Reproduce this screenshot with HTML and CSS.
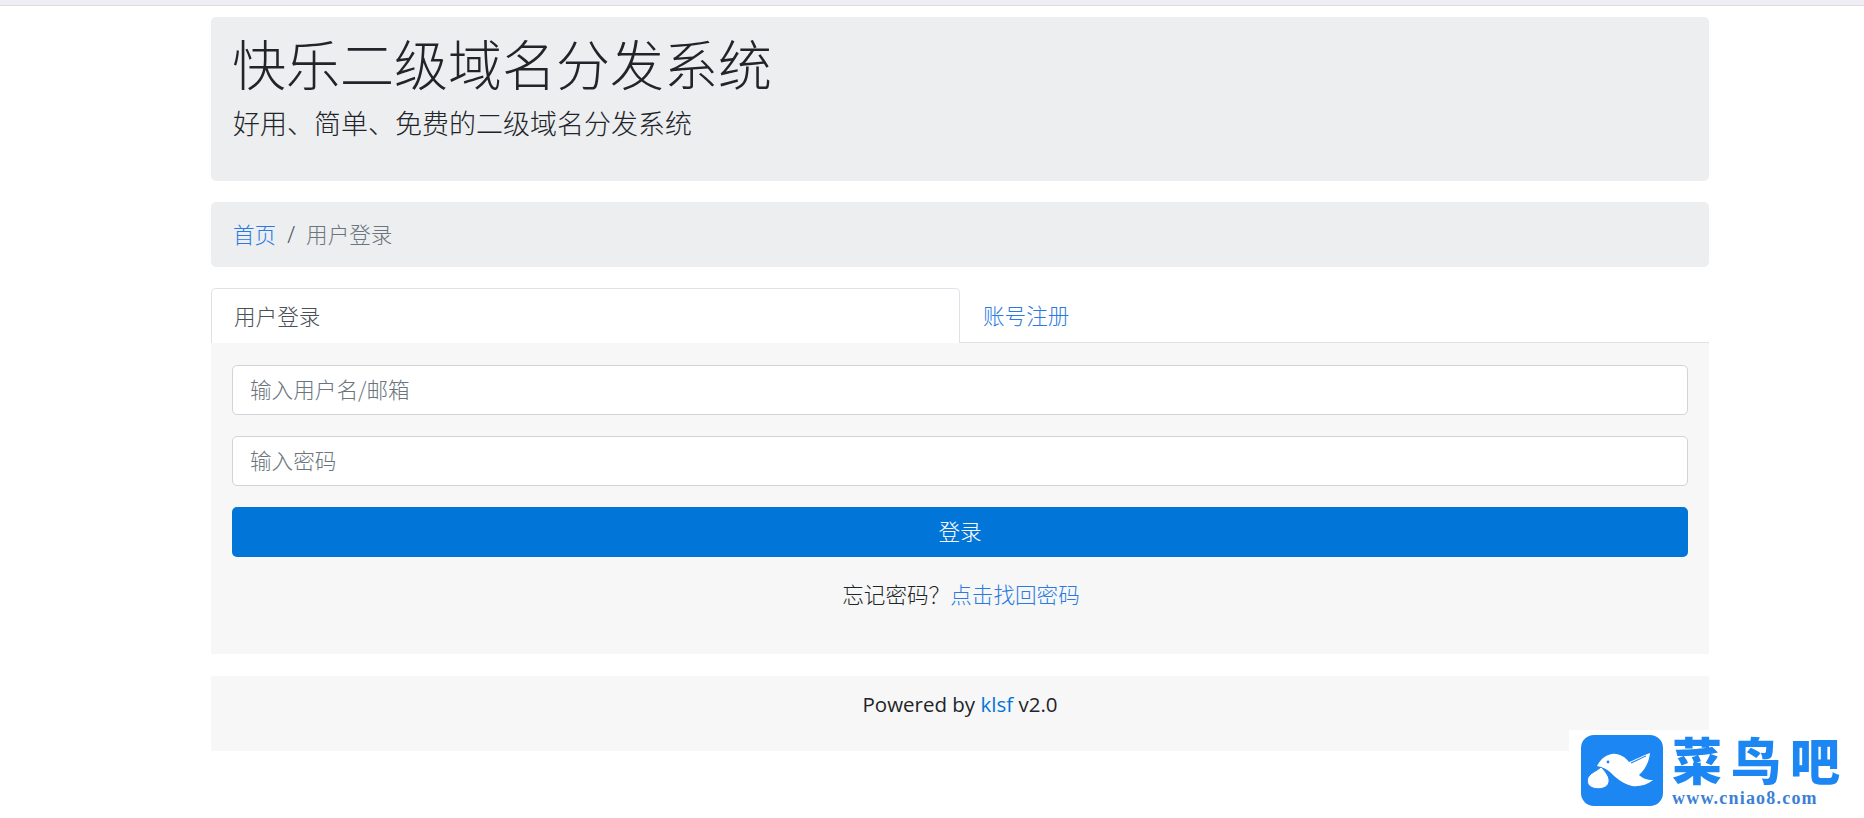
FILE: index.html
```html
<!DOCTYPE html>
<html lang="zh-CN">
<head>
<meta charset="utf-8">
<title>快乐二级域名分发系统</title>
<link rel="stylesheet" href="styles.css">
</head>
<body>
<div class="topbar"></div>
<main class="container">
  <header class="hero">
    <h1 class="hero-title">快乐二级域名分发系统</h1>
    <p class="hero-lead">好用、简单、免费的二级域名分发系统</p>
  </header>
  <nav class="crumbs">
    <a href="#" class="link">首页</a>
    <span class="crumb-sep">/</span>
    <span class="crumb-current">用户登录</span>
  </nav>
  <div class="tabs">
    <a href="#" class="tab tab-active">用户登录</a>
    <a href="#" class="tab link">账号注册</a>
  </div>
  <form class="panel">
    <input class="field" type="text" placeholder="输入用户名/邮箱">
    <input class="field" type="password" placeholder="输入密码">
    <button class="submit" type="button">登录</button>
    <p class="forgot">忘记密码？<a href="#" class="link">点击找回密码</a></p>
  </form>
  <footer class="foot">Powered by <a href="#" class="foot-link">klsf</a> v2.0</footer>
</main>
<aside class="watermark">
  <svg class="wm-icon" viewBox="0 0 82 71" aria-hidden="true">
    <rect width="82" height="71" rx="13" fill="#1c86f2"/>
    <path d="M16 31 C19 25 24 20 31 19 C38 18 44 22 48 27 C54 25 60 21 69 18 C68 27 64 35 58 40 C61 43 66 45 72 45 C66 50 58 52 51 51 C42 49 35 43 29 37 C26 34 21 32 16 31 Z" fill="#fff"/>
    <path d="M50 28 C55 26 60 23 65 21" fill="none" stroke="#1c86f2" stroke-width="1.2"/>
    <circle cx="27" cy="27" r="1.4" fill="#1c86f2"/>
    <path d="M20 32 C24 36 29 42 28 47 C27 53 19 55 12 53 C6 51 5 45 8 41 C11 37 16 36 20 32 Z" fill="#fff" stroke="#1c86f2" stroke-width="1"/>
  </svg>
  <div class="wm-text">
    <div class="wm-name">菜鸟吧</div>
    <div class="wm-url">www.cniao8.com</div>
  </div>
</aside>
</body>
</html>
```
FILE: styles.css
```css
* { box-sizing: border-box; }
html, body { margin: 0; padding: 0; }
body {
  background: #fff;
  color: #212529;
  font-family: "Noto Sans CJK SC", sans-serif;
  font-size: 21.6px;
  line-height: 32px;
  height: 818px;
  overflow: hidden;
  position: relative;
}
.topbar { height: 6px; background: #eeeef4; border-bottom: 1px solid #dddde0; }
.container { width: 1498px; margin: 11px 0 0 211px; }
.hero {
  height: 164px;
  background: #edeef0;
  border-radius: 5px;
  padding: 14px 21px 0;
}
.hero-title { margin: 0; font-size: 54px; line-height: 64px; font-weight: 300; color: #212529; }
.hero-lead { margin: 8px 0 0 1px; font-size: 27px; line-height: 40px; font-weight: 300; }
.crumbs {
  margin-top: 21px;
  height: 65px;
  background: #edeef0;
  border-radius: 5px;
  padding: 16px 22px;
  display: flex;
  font-weight: 300;
}
.crumb-sep { padding: 0 11px; color: #495057; font-family: "Open Sans", sans-serif; font-size: 23px; }
.crumb-current { color: #6c757d; }
.link { color: #2a7ae2; text-decoration: none; }
.tabs { margin-top: 21px; display: flex; height: 55px; font-weight: 300; }
.tab {
  flex: 1;
  padding: 11px 23px 0;
  text-decoration: none;
  border-bottom: 1px solid #dee2e6;
}
.tab-active {
  flex: none;
  width: 749px;
  padding-left: 22px;
  color: #495057;
  background: #fff;
  border: 1px solid #dee2e6;
  border-bottom: 0;
  border-radius: 5px 5px 0 0;
}
.panel {
  height: 311px;
  background: #f7f7f7;
  padding: 22px 21px 0;
  display: flex;
  flex-direction: column;
  font-weight: 300;
}
.field {
  display: block;
  width: 100%;
  height: 50px;
  margin-bottom: 21px;
  padding: 0 17px 4px;
  background: #fff;
  border: 1px solid #ced4da;
  border-radius: 5px;
  font: 300 21.6px "Noto Sans CJK SC", sans-serif;
  color: #495057;
}
.field::placeholder { color: #6c757d; opacity: 1; }
.submit {
  display: block;
  width: 100%;
  height: 50px;
  padding: 0 0 4px;
  background: #0275d8;
  color: #fff;
  border: 0;
  border-radius: 5px;
  font: 300 21.6px "Noto Sans CJK SC", sans-serif;
}
.forgot { margin: 21px 0 0; padding-left: 2px; text-align: center; }
.foot {
  margin-top: 22px;
  height: 75px;
  background: #f7f7f7;
  padding: 12px 0 0;
  text-align: center;
  font-family: "Open Sans", sans-serif;
  font-size: 20.5px;
}
.foot-link { color: #0275d8; text-decoration: none; }
.watermark {
  position: absolute;
  left: 1569px;
  top: 730px;
  right: 0;
  bottom: 0;
  background: #fff;
  padding: 5px 0 0 12px;
  display: flex;
  gap: 9px;
}
.wm-icon { width: 82px; height: 71px; flex: none; }
.wm-name {
  color: #1c86f2;
  font: 900 50px/52px "Noto Sans CJK SC", sans-serif;
  letter-spacing: 9px;
  white-space: nowrap;
  margin-top: -3px;
}
.wm-url {
  color: #3b7fd6;
  font: 700 18px/20px "Liberation Serif", serif;
  letter-spacing: 1.2px;
  margin-top: 4px;
  white-space: nowrap;
}
```
